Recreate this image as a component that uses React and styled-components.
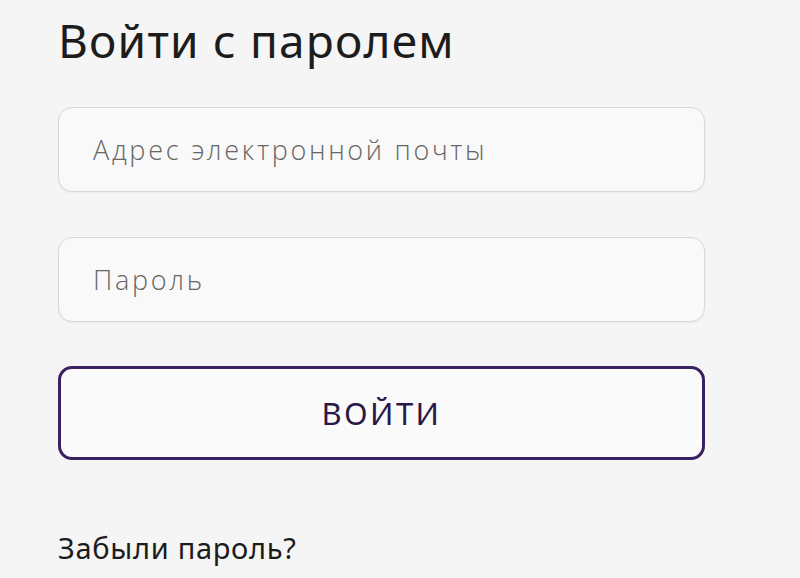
import React from "react";
import styled, { createGlobalStyle } from "styled-components";

const Global = createGlobalStyle`
  html, body {
    margin: 0;
    padding: 0;
    background: #f6f5f5;
  }
  body {
    font-family: "Noto Sans", "Open Sans", sans-serif;
  }
`;

const Page = styled.div`
  width: 800px;
  height: 578px;
  overflow: hidden;
  box-sizing: border-box;
  padding: 14px 0 0 58px;
`;

const Form = styled.form`
  width: 647px;
  display: flex;
  flex-direction: column;
`;

const Title = styled.h1`
  margin: 0;
  font-size: 46px;
  font-weight: 400;
  line-height: 52px;
  color: #1c1c1c;
  letter-spacing: 1.2px;
`;

const Field = styled.input`
  box-sizing: border-box;
  height: 85px;
  width: 100%;
  margin-top: ${props => props.gap}px;
  padding: 0 34px;
  border: 1px solid #d9d7d7;
  border-radius: 14px;
  background: #faf9f9;
  font-family: "Open Sans", "Noto Sans", sans-serif;
  font-size: 27px;
  font-weight: 300;
  letter-spacing: 2.7px;
  color: #333;
  outline: none;
  box-shadow: 0 1px 2px rgba(0, 0, 0, 0.05);

  &::placeholder {
    color: #666;
  }
`;

const Submit = styled.button`
  box-sizing: border-box;
  height: 94px;
  width: 100%;
  margin-top: 44px;
  border: 3px solid #392161;
  border-radius: 14px;
  background: #fbfafa;
  font-family: "Noto Sans", sans-serif;
  font-size: 31px;
  font-weight: 400;
  color: #2a1948;
  letter-spacing: 2.4px;
  cursor: pointer;
`;

const Forgot = styled.a`
  margin-top: 68px;
  font-size: 29px;
  color: #1c1c1c;
  text-decoration: none;
  letter-spacing: 0.7px;
`;

export default function App() {
  return (
    <Page>
      <Global />
      <Form onSubmit={e => e.preventDefault()}>
        <Title>Войти с паролем</Title>
        <Field gap={41} type="email" placeholder="Адрес электронной почты" />
        <Field gap={45} type="password" placeholder="Пароль" />
        <Submit type="submit">ВОЙТИ</Submit>
        <Forgot href="#">Забыли пароль?</Forgot>
      </Form>
    </Page>
  );
}
